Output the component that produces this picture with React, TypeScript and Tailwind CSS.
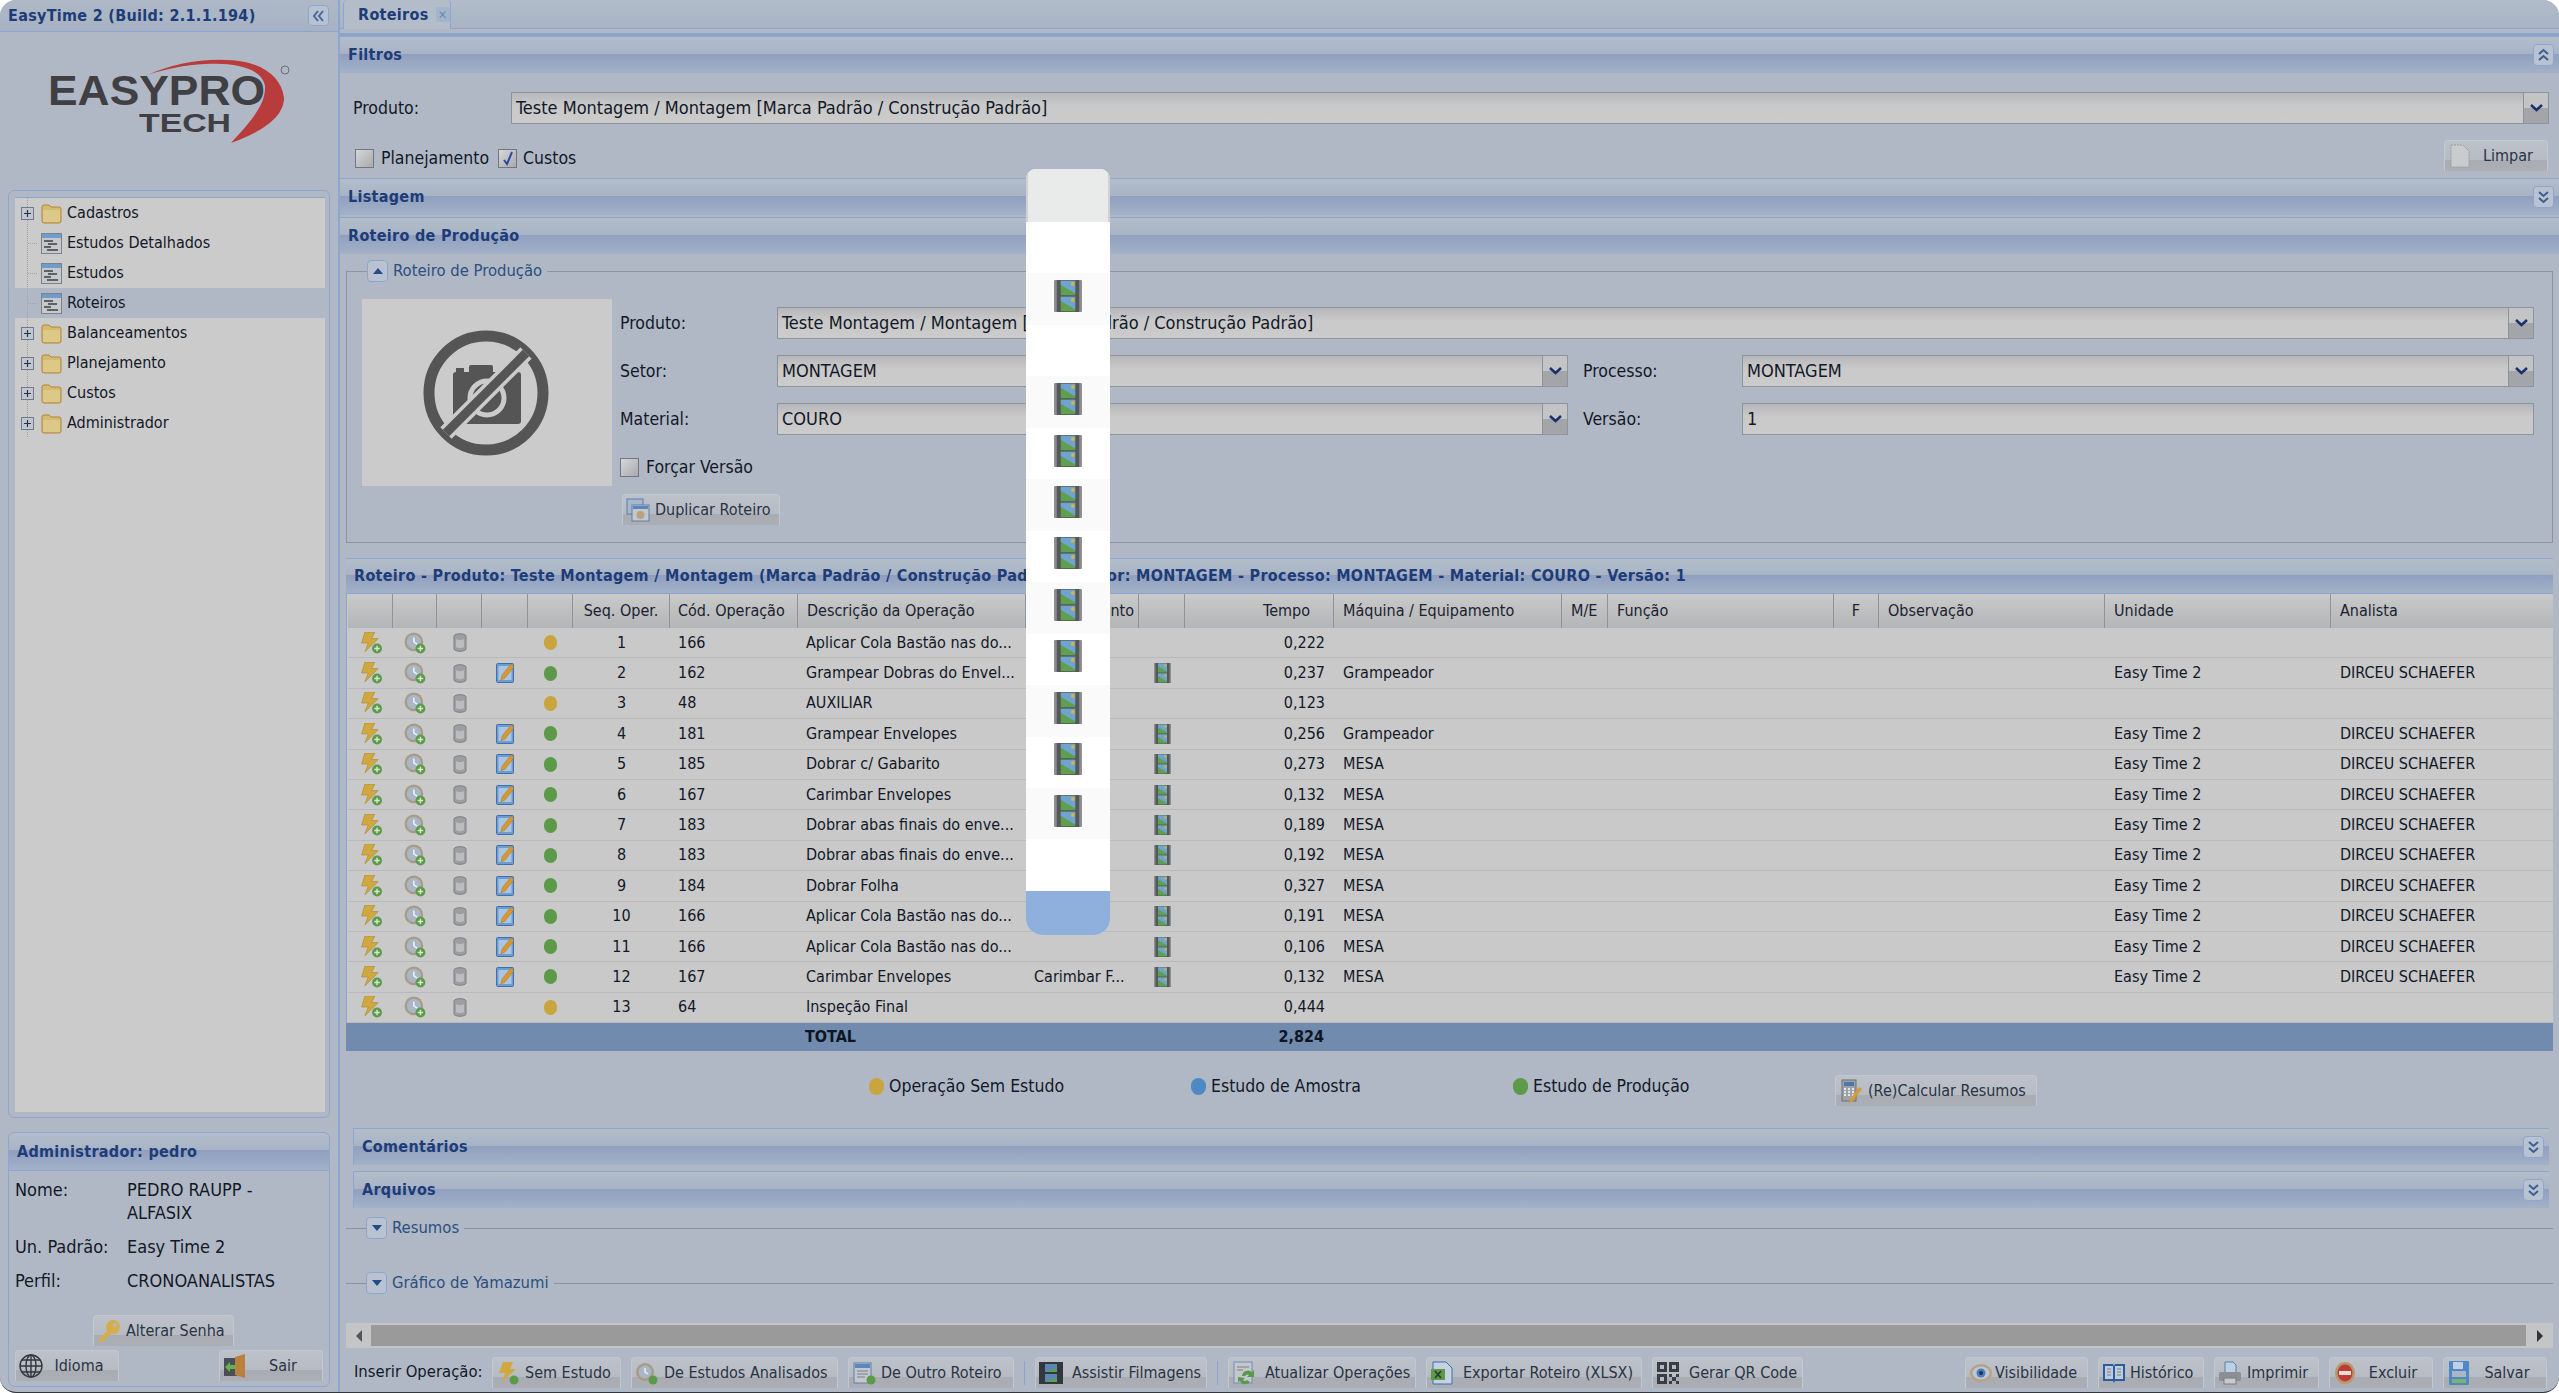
import type { ReactNode } from "react";

const headerBg = "bg-[linear-gradient(#b3bdca,#a8b4c6_46%,#8f9fbe_46%,#a3b1c8)]";
const gridCols = "grid grid-cols-[45px_44px_45px_46px_45px_97px_128px_228px_113px_46px_149px_228px_46px_226px_45px_226px_226px_226px]";

// ---------- icons ----------
function Bolt() {
    return (
        <svg width="24" height="22" viewBox="0 0 21 20">
            <path d="M5 0h9l-3 6h6L5 18l3-8H2z" fill="#cfa93f" stroke="#b08a2c" strokeWidth=".6" />
            <circle cx="16" cy="15" r="4.500" fill="#5c9a4a" />
            <path d="M16 12.500v5M13.500 15h5" stroke="#d9e6d2" strokeWidth="1.300" />
        </svg>
    );
}
function ClockPlus() {
    return (
        <svg width="23" height="22" viewBox="0 0 21 20">
            <circle cx="9" cy="9" r="8.500" fill="#a89b84" />
            <circle cx="9" cy="9" r="6.500" fill="#a9b6c6" />
            <path d="M9 5v4l3 2" stroke="#eef1f4" strokeWidth="1.400" fill="none" />
            <circle cx="15" cy="15" r="4.500" fill="#5c9a4a" />
            <path d="M15 12.500v5M12.500 15h5" stroke="#d9e6d2" strokeWidth="1.300" />
        </svg>
    );
}
function Cyl() {
    return (
        <svg width="14" height="19" viewBox="0 0 14 19">
            <path d="M1 3c0-3 12-3 12 0v13c0 3-12 3-12 0z" fill="#9c9ea1" stroke="#7e8083" />
            <path d="M3 6c2 1.500 6 1.500 8 0v8c-2 1.500-6 1.500-8 0z" fill="#bcbdbf" />
        </svg>
    );
}
function DocPen() {
    return (
        <svg width="19" height="20" viewBox="0 0 19 20">
            <rect x=".5" y=".5" width="17" height="19" rx="1" fill="#6e9bd0" stroke="#3f6fae" />
            <rect x="2.500" y="3" width="13" height="14" fill="#a9c5e2" />
            <path d="M15 1l3 2.500-9 11.500-4 2 1-5z" fill="#d9982f" stroke="#a5772a" strokeWidth=".5" />
        </svg>
    );
}
function Dot({ color, size = 13 }: { color: string; size?: number }) {
    return <span className="inline-block rounded-full" style={{ width: size, height: size + 2, background: color }} />;
}
function Film({ w = 17, h = 20 }: { w?: number; h?: number }) {
    return (
        <svg width={w} height={h} viewBox="0 0 17 20">
            <rect x="0" y="0" width="17" height="20" rx="1" fill="#55585a" />
            <path d="M0 0h1.500v20H0zM15.500 0H17v20h-1.500z" fill="#8a8c8e" />
            <rect x="4" y=".5" width="9" height="9" fill="#5f9f4d" />
            <path d="M4 .5h9v8L4 3z" fill="#6fa4d0" />
            <rect x="4" y="10.500" width="9" height="9" fill="#5f9f4d" />
            <path d="M4 10.500h9v8L4 13z" fill="#6fa4d0" />
            <circle cx="11.500" cy="2.500" r="1.200" fill="#d8b04e" />
            <circle cx="11.500" cy="12.500" r="1.200" fill="#d8b04e" />
        </svg>
    );
}
function Folder() {
    return (
        <svg width="21" height="21" viewBox="0 0 21 21">
            <path d="M1 4q0-2 2-2h5l2 2h8q2 0 2 2v12q0 2-2 2H3q-2 0-2-2z" fill="#d5bb70" stroke="#b3833a" />
            <rect x="2" y="7" width="17" height="12" fill="#dcc987" />
        </svg>
    );
}
function TreeDoc() {
    return (
        <svg width="21" height="21" viewBox="0 0 21 21">
            <rect x=".5" y=".5" width="20" height="20" fill="#c6c9cc" stroke="#7d8287" />
            <rect x="1" y="1" width="19" height="4" fill="#6f9cca" />
            <path d="M3 8h9M7 11h9M3 14h7M6 17h11" stroke="#3c4044" strokeWidth="1.300" />
        </svg>
    );
}
function Chevrons({ up = false }: { up?: boolean }) {
    return (
        <span className="flex h-[22px] w-[21px] items-center justify-center rounded-[4px] border border-[#8ea6cf] bg-[#b8c2d0]">
            <svg width="13" height="14" viewBox="0 0 13 14" fill="none" stroke="#3c5f93" strokeWidth="2">
                {up ? <path d="M2 6l4.500-4 4.500 4M2 12l4.500-4 4.500 4" /> : <path d="M2 2l4.500 4 4.500-4M2 8l4.500 4 4.500-4" />}
            </svg>
        </span>
    );
}
function LegendToggle({ up = false }: { up?: boolean }) {
    return (
        <span className="flex h-[22px] w-[21px] items-center justify-center rounded-[4px] border border-[#8ea6cf] bg-[#b8c2d0]">
            <svg width="10" height="6" viewBox="0 0 10 6" fill="#254c86">
                {up ? <path d="M5 0l5 6H0z" /> : <path d="M0 0h10L5 6z" />}
            </svg>
        </span>
    );
}
function Svg20({ children }: { children: ReactNode }) {
    return <svg width="24" height="24" viewBox="0 0 24 24" className="shrink-0">{children}</svg>;
}
const icons: Record<string, ReactNode> = {
    bolt: <Svg20><path d="M7 1h10l-3 7h6L6 21l3-9H3z" fill="#cfa93f" /><circle cx="18" cy="19" r="4.500" fill="#5c9a4a" /></Svg20>,
    clock: <Svg20><circle cx="10" cy="11" r="9" fill="#a89b84" /><circle cx="10" cy="11" r="6.500" fill="#a9b6c6" /><path d="M10 7v4l3 2" stroke="#eef1f4" strokeWidth="1.500" fill="none" /><circle cx="18" cy="19" r="4.500" fill="#5c9a4a" /></Svg20>,
    win: <Svg20><rect x="2" y="2" width="17" height="20" fill="#c4c8cd" stroke="#5d7eab" /><rect x="3" y="3" width="15" height="4" fill="#5d87bb" /><path d="M5 10h11M5 13h11M5 16h8" stroke="#7a8087" /><circle cx="19" cy="19" r="4.500" fill="#5c9a4a" /></Svg20>,
    film: <Svg20><rect x="0" y="1" width="24" height="22" fill="#33383f" /><rect x="6" y="3" width="12" height="8" fill="#5b86b6" /><rect x="6" y="13" width="12" height="8" fill="#5b86b6" /><path d="M6 11l12-4v4zM6 21l12-4v4z" fill="#5f9f4d" /></Svg20>,
    refresh: <Svg20><rect x="2" y="1" width="18" height="21" fill="#c4c8cd" stroke="#6f8fb5" /><path d="M5 6h12M5 9h6" stroke="#7a8087" /><path d="M10 15a6 6 0 0 1 10-4l2-2v7h-7l2-2a3 3 0 0 0-4 1zM6 16l7 1-2 2a3 3 0 0 0 4 0l3 2a6 6 0 0 1-10-1l-2 1z" fill="#58994a" /></Svg20>,
    excel: <Svg20><path d="M3 1h13l6 6v16H3z" fill="#c5d2e2" stroke="#3f6fae" /><path d="M1 8h14v11H1z" fill="#5c9a4a" /><path d="M5 10l6 7M11 10l-6 7" stroke="#2e3a35" strokeWidth="1.800" /></Svg20>,
    qr: <Svg20><path d="M1 1h10v10H1zM13 1h10v10H13zM1 13h10v10H1z" fill="#3a3d42" /><path d="M4 4h4v4H4zM16 4h4v4h-4zM4 16h4v4H4z" fill="#b5bac3" /><path d="M13 13h3v3h-3zM20 13h3v3h-3zM16 16h4v4h-4zM13 20h3v3h-3zM20 20h3v3h-3z" fill="#3a3d42" /></Svg20>,
    eye: <Svg20><ellipse cx="12" cy="12" rx="11" ry="9" fill="#bba17f" /><ellipse cx="12" cy="12" rx="8.500" ry="6.500" fill="#b9c8dc" /><circle cx="12" cy="12" r="4.500" fill="#4d7db8" /><circle cx="12" cy="12" r="2" fill="#1f3350" /></Svg20>,
    book: <Svg20><path d="M1 3h10l1 2 1-2h10v17H13l-1 2-1-2H1z" fill="#2b5c9e" /><path d="M3 5h8v13H3zM13 5h8v13h-8z" fill="#bfccdb" /><path d="M5 8h4M5 11h4M5 14h4M15 8h4M15 11h4M15 14h4" stroke="#7a8087" /></Svg20>,
    print: <Svg20><path d="M7 1h8l3 3v8H7z" fill="#bdd0e6" stroke="#5d7eab" /><rect x="1" y="11" width="22" height="9" rx="2" fill="#8b8f94" /><rect x="6" y="17" width="12" height="6" fill="#c7cacd" stroke="#7a7d80" /></Svg20>,
    stop: <Svg20><ellipse cx="12" cy="12" rx="10" ry="11" fill="#b9966e" /><ellipse cx="12" cy="12" rx="7.500" ry="8.500" fill="#bb3d35" /><rect x="6" y="10" width="12" height="4" fill="#e5dcd2" /></Svg20>,
    disk: <Svg20><rect x="2" y="0" width="20" height="24" rx="1" fill="#4f88c4" /><rect x="6" y="1" width="10" height="7" fill="#bdd0e6" /><rect x="5" y="10" width="14" height="6" fill="#a9b6c6" /><rect x="5" y="18" width="14" height="4" fill="#7eb26a" /></Svg20>,
    page: <Svg20><path d="M3 1h12l6 6v16H3z" fill="#c9cbcd" stroke="#9a9c9f" strokeDasharray="2 1" /></Svg20>,
    dup: <Svg20><rect x="1" y="1" width="16" height="15" fill="#a9b7cc" stroke="#5d7eab" /><rect x="6" y="7" width="17" height="16" fill="#c4c8cd" stroke="#5d7eab" /><rect x="7" y="8" width="15" height="3" fill="#5d87bb" /><circle cx="14.500" cy="17" r="4" fill="#bba17f" /></Svg20>,
    calc: <Svg20><rect x="3" y="1" width="14" height="21" fill="#9da1a8" stroke="#6c7077" /><rect x="5" y="3" width="10" height="4" fill="#4d77a8" /><path d="M5 10h10M5 13h10M5 16h10" stroke="#e3e5e8" strokeDasharray="2 2" strokeWidth="2" /><path d="M20 8l3 2-10 13-3 1 1-4z" fill="#d79a35" /></Svg20>,
    key: <Svg20><circle cx="16" cy="8" r="7" fill="#d5ad4a" /><circle cx="18" cy="6" r="2" fill="#b1b8c5" /><path d="M11 11L2 20v3h4l2-2 1-3 3-1 2-2z" fill="#d5ad4a" /></Svg20>,
    globe: <Svg20><g fill="none" stroke="#33373c" strokeWidth="1.400"><circle cx="12" cy="12" r="11" /><ellipse cx="12" cy="12" rx="5" ry="11" /><path d="M1 12h22M3 6h18M3 18h18M12 1v22" /></g></Svg20>,
    door: <Svg20><rect x="1" y="4" width="13" height="18" fill="#4a5057" /><path d="M12 3l10-3v24l-10-3z" fill="#b9813d" /><path d="M2 13l5-5v3h6v4H7v3z" fill="#6fae4e" /></Svg20>,
};

// ---------- small parts ----------
function Btn({ w, icon, label, center = false, gap = "gap-[5px]" }: { w: string; icon: string; label: string; center?: boolean; gap?: string }) {
    return (
        <div className={`${w} ${gap} flex h-[31px] shrink-0 items-center overflow-hidden rounded-t-[4px] border border-b-0 border-[#c3c7ce] bg-[linear-gradient(#bcc1ca,#b6bbc4_62%,#a9adb3_62%,#abafb5)] pl-[3px] whitespace-nowrap text-[#2a3342]`}>
            {icons[icon]}
            <span className={center ? "flex-1 pr-[8px] text-center" : ""}>{label}</span>
        </div>
    );
}
function PanelHeader({ title, chevron, className = "" }: { title: string; chevron?: "up" | "down"; className?: string }) {
    return (
        <div className={`${headerBg} flex h-[37px] shrink-0 items-center justify-between border-t border-[#8ea6cf] pr-[5px] pl-[8px] font-bold tracking-[0.3px] text-[#1d3c78] ${className}`}>
            <span>{title}</span>
            {chevron && <Chevrons up={chevron === "up"} />}
        </div>
    );
}
function Select({ value, className = "" }: { value: string; className?: string }) {
    return (
        <div className={`flex h-[32px] items-stretch border border-[#8f949b] bg-[linear-gradient(#b6b7ba,#c9c9c9_40%,#cbcbcb)] ${className}`}>
            <span className="flex-1 overflow-hidden pl-[4px] text-[18px] leading-[30px] whitespace-nowrap text-[#111827]">{value}</span>
            <span className="flex w-[25px] items-center justify-center border-l border-[#8f949b] bg-[linear-gradient(#c3c4c6,#c3c4c6_50%,#a3a5a8_50%)]">
                <svg width="13" height="8" viewBox="0 0 13 8" fill="none" stroke="#1c2f6e" strokeWidth="2.500"><path d="M1 1l5.500 5L12 1" /></svg>
            </span>
        </div>
    );
}
function Check({ checked = false }: { checked?: boolean }) {
    return (
        <span className="flex h-[19px] w-[19px] shrink-0 items-center justify-center border border-[#73777d] bg-[linear-gradient(135deg,#d6d7d9,#a8aaad)]">
            {checked && <svg width="12" height="15" viewBox="0 0 12 15" fill="none" stroke="#2e4a9a" strokeWidth="2"><path d="M2 9l3 4 5-12" /></svg>}
        </span>
    );
}
function Legend({ color, label, className }: { color: string; label: string; className: string }) {
    return (
        <div className={`flex items-center gap-[5px] text-[17.5px] ${className}`}>
            <Dot color={color} size={15} />
            <span className="text-[#111827]">{label}</span>
        </div>
    );
}
function CollapsedSet({ label, className = "" }: { label: string; className?: string }) {
    return (
        <div className={`mx-[6px] flex h-[22px] items-center ${className}`}>
            <div className="h-px w-[20px] bg-[#8f949b]" />
            <LegendToggle />
            <span className="px-[5px] text-[16.5px] text-[#2a4f80]">{label}</span>
            <div className="h-px flex-1 bg-[#8f949b]" />
        </div>
    );
}

// ---------- data ----------
const ops = [
    { s: 1, c: 166, d: "Aplicar Cola Bastão nas do...", t: "0,222", m: "", st: "y" },
    { s: 2, c: 162, d: "Grampear Dobras do Envel...", t: "0,237", m: "Grampeador", st: "g" },
    { s: 3, c: 48, d: "AUXILIAR", t: "0,123", m: "", st: "y" },
    { s: 4, c: 181, d: "Grampear Envelopes", t: "0,256", m: "Grampeador", st: "g" },
    { s: 5, c: 185, d: "Dobrar c/ Gabarito", t: "0,273", m: "MESA", st: "g" },
    { s: 6, c: 167, d: "Carimbar Envelopes", t: "0,132", m: "MESA", st: "g" },
    { s: 7, c: 183, d: "Dobrar abas finais do enve...", t: "0,189", m: "MESA", st: "g" },
    { s: 8, c: 183, d: "Dobrar abas finais do enve...", t: "0,192", m: "MESA", st: "g" },
    { s: 9, c: 184, d: "Dobrar Folha", t: "0,327", m: "MESA", st: "g" },
    { s: 10, c: 166, d: "Aplicar Cola Bastão nas do...", t: "0,191", m: "MESA", st: "g" },
    { s: 11, c: 166, d: "Aplicar Cola Bastão nas do...", t: "0,106", m: "MESA", st: "g" },
    { s: 12, c: 167, d: "Carimbar Envelopes", x: "Carimbar F...", t: "0,132", m: "MESA", st: "g" },
    { s: 13, c: 64, d: "Inspeção Final", t: "0,444", m: "", st: "y" },
];
const tree = [
    { label: "Cadastros", folder: true },
    { label: "Estudos Detalhados" },
    { label: "Estudos" },
    { label: "Roteiros", active: true },
    { label: "Balanceamentos", folder: true },
    { label: "Planejamento", folder: true },
    { label: "Custos", folder: true },
    { label: "Administrador", folder: true },
];
const heads = ["", "", "", "", "", "Seq. Oper.", "Cód. Operação", "Descrição da Operação", "Procedimento", "", "Tempo", "Máquina / Equipamento", "M/E", "Função", "F", "Observação", "Unidade", "Analista"];
const headClass = ["", "", "", "", "", "text-center", "pl-[8px]", "pl-[9px]", "pr-[4px] text-right", "", "pr-[23px] text-right", "pl-[9px]", "pl-[9px]", "pl-[9px]", "text-center", "pl-[9px]", "pl-[9px]", "pl-[9px]"];
const ghostIcons = [1, 3, 4, 5, 6, 7, 8, 9, 10, 11];

function Logo() {
    return (
        <svg width="339" height="158" viewBox="0 0 339 158">
            <text x="48" y="73" textLength="217" lengthAdjust="spacingAndGlyphs" fontSize="42" fontWeight="700" fontFamily="Liberation Sans" fill="#3f3f44">EASYPRO</text>
            <text x="139" y="100" textLength="92" lengthAdjust="spacingAndGlyphs" fontSize="26" fontWeight="700" fontFamily="Liberation Sans" fill="#3f3f44">TECH</text>
            <path d="M147 43C175 30 215 24 245 30C268 35 282 48 284 66C284 85 262 100 231 111C252 88 266 72 265 54C262 36 235 30 205 32C185 33 165 37 147 43Z" fill="#b93c3c" />
            <circle cx="285" cy="38" r="4" fill="none" stroke="#6b6f75" strokeWidth="1" />
        </svg>
    );
}

function Sidebar() {
    return (
        <aside className="flex h-full w-[340px] shrink-0 flex-col border-r-2 border-[#8ea6cf]">
            <div className="flex h-[32px] items-center justify-between border-b border-[#8ea6cf] bg-[linear-gradient(#aeb8c6,#a6b2c4)] pr-[9px] pl-[8px] font-bold tracking-[0.3px] text-[#1d3c78]">
                <span>EasyTime 2 (Build: 2.1.1.194)</span>
                <span className="flex h-[21px] w-[21px] items-center justify-center rounded-[4px] border border-[#8ea6cf] bg-[#b8c2d0]">
                    <svg width="13" height="12" viewBox="0 0 13 12" fill="none" stroke="#466a9c" strokeWidth="2"><path d="M6 1L2 6l4 5M11 1L7 6l4 5" /></svg>
                </span>
            </div>
            <div className="h-[158px] shrink-0"><Logo /></div>
            <div className="mx-[8px] flex h-[928px] shrink-0 flex-col rounded-[6px] border border-[#8ea6cf] pt-[6px] pr-[4px] pb-[5px] pl-[6px]">
                <div className="flex-1 border-t border-[#8ea6cf] bg-[#cbcbcb]">
                    {tree.map((n) => (
                        <div key={n.label} className={`flex h-[30px] items-center ${n.active ? "bg-[#b1b8c5]" : ""}`}>
                            <svg width="26" height="30" viewBox="0 0 26 30" className="shrink-0">
                                <path d="M12.500 0v30" stroke="#a0a3a6" strokeDasharray="1 1" />
                                {n.folder ? (
                                    <g><rect x="6.500" y="9.500" width="12" height="12" fill="#c2c6cd" stroke="#6d7a8f" /><path d="M9 15.500h7M12.500 12v7" stroke="#26324d" strokeWidth="1.200" /></g>
                                ) : (
                                    <path d="M13 15.500h9" stroke="#a0a3a6" strokeDasharray="1 1" />
                                )}
                            </svg>
                            {n.folder ? <Folder /> : <TreeDoc />}
                            <span className="ml-[5px] text-[#111827]">{n.label}</span>
                        </div>
                    ))}
                </div>
            </div>
            <div className="mx-[8px] mt-[14px] flex h-[255px] shrink-0 flex-col rounded-[6px] border border-[#8ea6cf]">
                <div className={`${headerBg} flex h-[38px] shrink-0 items-center rounded-t-[6px] border-b border-[#8ea6cf] pl-[8px] font-bold tracking-[0.3px] text-[#1d3c78]`}>Administrador: pedro</div>
                <div className="grid grid-cols-[112px_1fr] pt-[7px] pr-[10px] pl-[6px] text-[18px] text-[#111827]">
                    <span className="leading-[23px]">Nome:</span>
                    <span className="leading-[23px]">PEDRO RAUPP - ALFASIX</span>
                    <span className="mt-[11px] leading-[23px]">Un. Padrão:</span>
                    <span className="mt-[11px] leading-[23px]">Easy Time 2</span>
                    <span className="mt-[11px] leading-[23px]">Perfil:</span>
                    <span className="mt-[11px] leading-[23px]">CRONOANALISTAS</span>
                </div>
                <div className="mt-[23px] flex justify-center pr-[11px]"><Btn w="w-[141px]" icon="key" label="Alterar Senha" /></div>
                <div className="mt-[4px] flex justify-between px-[6px]">
                    <Btn w="w-[104px]" icon="globe" label="Idioma" center />
                    <Btn w="w-[104px]" icon="door" label="Sair" center />
                </div>
            </div>
        </aside>
    );
}

function OperacoesTable() {
    return (
        <div className="mx-[6px]">
            <div className={`${headerBg} flex h-[36px] items-center border-t border-b border-[#8ea6cf] pl-[8px] font-bold tracking-[0.3px] whitespace-nowrap text-[#1d3c78]`}>
                Roteiro - Produto: Teste Montagem / Montagem (Marca Padrão / Construção Padrão) - Setor: MONTAGEM - Processo: MONTAGEM - Material: COURO - Versão: 1
            </div>
            <div className="border-l border-[#8ea6cf] bg-[#c9c9c9] pl-px">
                <div className={`${gridCols} h-[34px] items-stretch bg-[linear-gradient(#c9cac9,#b3b5b7)] text-[#1a2230]`}>
                    {heads.map((h, i) => (
                        <div key={i} className={`overflow-hidden border-r border-[#8f949b] leading-[34px] whitespace-nowrap last:border-r-0 ${headClass[i]}`}>{h}</div>
                    ))}
                </div>
                {ops.map((o) => (
                    <div key={o.s} className={`${gridCols} h-[30.4px] items-center border-b border-[#b7b9bc] bg-[#c9c9c9] whitespace-nowrap text-[#111827]`}>
                        <div className="flex justify-center"><Bolt /></div>
                        <div className="flex justify-center"><ClockPlus /></div>
                        <div className="flex justify-center"><Cyl /></div>
                        <div className="flex justify-center">{o.st === "g" && <DocPen />}</div>
                        <div className="flex justify-center"><Dot color={o.st === "g" ? "#5c9a4a" : "#c9a53f"} /></div>
                        <div className="text-center">{o.s}</div>
                        <div className="pl-[8px]">{o.c}</div>
                        <div className="pl-[8px]">{o.d}</div>
                        <div className="pl-[8px]">{o.x ?? ""}</div>
                        <div className="flex justify-center">{o.m && <Film />}</div>
                        <div className="pr-[9px] text-right">{o.t}</div>
                        <div className="pl-[9px]">{o.m}</div>
                        <div /><div /><div /><div />
                        <div className="pl-[9px]">{o.m && "Easy Time 2"}</div>
                        <div className="pl-[9px]">{o.m && "DIRCEU SCHAEFER"}</div>
                    </div>
                ))}
            </div>
            <div className={`${gridCols} h-[28px] items-center bg-[#708bae] pl-px font-bold text-[#0f1520]`}>
                <div className="col-span-7" />
                <div className="pl-[8px]">TOTAL</div>
                <div /><div />
                <div className="pr-[9px] text-right">2,824</div>
            </div>
        </div>
    );
}

// bright column floating over the page
function GhostColumn() {
    return (
        <div className="absolute top-[169px] left-[1026px] flex w-[84px] flex-col overflow-hidden rounded-t-[10px] rounded-b-[16px] bg-white">
            <div className="h-[53px] border-x-[2px] border-[#d0d2d2] bg-[#e9eaea]" />
            {ops.map((_, i) => (
                <div key={i} className={`flex h-[51.46px] items-center justify-center pb-[6px] ${i % 2 === 1 ? "bg-[#fafafa]" : "bg-white"}`}>
                    {ghostIcons.includes(i) && <Film w={28} h={32} />}
                </div>
            ))}
            <div className="h-[44px] bg-[#8fb0dc]" />
        </div>
    );
}

function Main() {
    return (
        <main className="flex h-full w-[2219px] flex-col">
            <div className="flex h-[36px] shrink-0 flex-col">
                <div className="flex h-[29px] items-start border-b border-[#8ea6cf] bg-[linear-gradient(#b2bcc9,#a8b4c5)] pl-[3px]">
                    <div className="flex h-[29px] w-[108px] items-center gap-[7px] rounded-t-[4px] border-x border-[#8ea6cf] bg-[#b3bcc9] pl-[14px] font-bold tracking-[0.3px] text-[#1d3c78]">
                        <span>Roteiros</span>
                        <span className="flex h-[15px] w-[15px] items-center justify-center rounded-[2px] bg-[#a3b4cd] text-[12px] leading-none font-bold text-[#6f88ae]">✕</span>
                    </div>
                </div>
                <div className="mt-[4px] h-[3px] bg-[#8ea3c8]" />
            </div>
            <PanelHeader title="Filtros" chevron="up" />
            <div className="flex h-[105px] shrink-0 flex-col text-[17.5px]">
                <div className="mt-[19px] flex items-center">
                    <span className="w-[171px] pl-[13px] text-[#111827]">Produto:</span>
                    <Select className="w-[2038px]" value="Teste Montagem / Montagem [Marca Padrão / Construção Padrão]" />
                </div>
                <div className="mt-[19px] flex h-[31px] items-center pr-[11px] pl-[15px] text-[#111827]">
                    <Check /><span className="mr-[9px] ml-[7px]">Planejamento</span>
                    <Check checked /><span className="ml-[6px]">Custos</span>
                    <div className="ml-auto -mt-[6px] text-[16px]"><Btn w="w-[104px]" icon="page" label="Limpar" center /></div>
                </div>
            </div>
            <PanelHeader title="Listagem" chevron="down" />
            <PanelHeader title="Roteiro de Produção" className="mt-[2px]" />

            <fieldset className="mx-[6px] mt-[6px] h-[283px] shrink-0 border border-[#8f949b]">
                <legend className="ml-[20px] flex h-[22px] items-center gap-[5px] px-0 pr-[5px] text-[16.5px] text-[#2a4f80]">
                    <LegendToggle up />Roteiro de Produção
                </legend>
                <div className="flex pt-[17px] pl-[15px]">
                    <div className="flex h-[187px] w-[250px] shrink-0 items-center justify-center bg-[#cbcbcb]">
                        <svg width="126" height="126" viewBox="0 0 126 126" className="mr-[3px]">
                            <rect x="30" y="42" width="68" height="52" rx="3" fill="#555" />
                            <rect x="46" y="35" width="24" height="10" rx="2" fill="#555" />
                            <rect x="33" y="38" width="8" height="4" fill="#555" />
                            <circle cx="64" cy="68" r="17" fill="none" stroke="#cbcbcb" strokeWidth="5" />
                            <circle cx="63" cy="63" r="57" fill="none" stroke="#555" strokeWidth="11" />
                            <path d="M103 23L23 103" stroke="#cbcbcb" strokeWidth="16" />
                            <path d="M103 23L23 103" stroke="#555" strokeWidth="9" />
                        </svg>
                    </div>
                    <div className="flex-1 pl-[8px] text-[17.5px] text-[#111827]">
                        <div className="mt-[8px] flex items-center">
                            <span className="w-[157px]">Produto:</span>
                            <Select className="w-[1757px]" value="Teste Montagem / Montagem [Marca Padrão / Construção Padrão]" />
                        </div>
                        <div className="mt-[16px] flex items-center">
                            <span className="w-[157px]">Setor:</span>
                            <Select className="w-[791px]" value="MONTAGEM" />
                            <span className="w-[174px] pl-[15px]">Processo:</span>
                            <Select className="w-[792px]" value="MONTAGEM" />
                        </div>
                        <div className="mt-[16px] flex items-center">
                            <span className="w-[157px]">Material:</span>
                            <Select className="w-[791px]" value="COURO" />
                            <span className="w-[174px] pl-[15px]">Versão:</span>
                            <div className="h-[32px] w-[792px] border border-[#8f949b] bg-[linear-gradient(#b6b7ba,#c9c9c9_40%,#cbcbcb)] pl-[4px] text-[18px] leading-[30px]">1</div>
                        </div>
                        <div className="mt-[19px] flex items-center gap-[7px]"><Check /><span>Forçar Versão</span></div>
                        <div className="mt-[14px] ml-[2px] text-[16px]"><Btn w="w-[158px]" icon="dup" label="Duplicar Roteiro" /></div>
                    </div>
                </div>
            </fieldset>

            <div className="mt-[15px]"><OperacoesTable /></div>

            <div className="relative flex h-[77px] shrink-0 items-start pt-[22px]">
                <Legend color="#c9a53f" label="Operação Sem Estudo" className="ml-[529px] w-[322px]" />
                <Legend color="#4d8ac4" label="Estudo de Amostra" className="w-[322px]" />
                <Legend color="#5c9a4a" label="Estudo de Produção" className="w-[322px]" />
                <div className="mt-[2px]"><Btn w="w-[202px]" icon="calc" label="(Re)Calcular Resumos" /></div>
            </div>

            <div className="mx-[13px] mr-[10px] flex flex-col gap-[6px]">
                <PanelHeader title="Comentários" chevron="down" className="border-l pl-[8px]" />
                <PanelHeader title="Arquivos" chevron="down" className="border-l pl-[8px]" />
            </div>
            <CollapsedSet label="Resumos" className="mt-[9px]" />
            <CollapsedSet label="Gráfico de Yamazumi" className="mt-[33px]" />

            <div className="mx-[6px] mt-[29px] flex h-[25px] shrink-0 items-stretch bg-[#c3c5c7] py-[2px]">
                <div className="flex w-[25px] items-center justify-center"><svg width="6" height="12" viewBox="0 0 6 12" fill="#555"><path d="M6 0v12L0 6z" /></svg></div>
                <div className="flex-1 bg-[#9a9a9a]" />
                <div className="flex w-[27px] items-center justify-center"><svg width="6" height="12" viewBox="0 0 6 12" fill="#333"><path d="M0 0v12l6-6z" /></svg></div>
            </div>

            <div className="mt-[9px] flex items-center gap-[10px] pl-[14px] whitespace-nowrap text-[#111827]">
                <span className="mr-[1px] w-[127px] text-[16.5px]">Inserir Operação:</span>
                <Btn w="w-[129px]" icon="bolt" label="Sem Estudo" />
                <Btn w="w-[207px]" icon="clock" label="De Estudos Analisados" />
                <Btn w="w-[166px]" icon="win" label="De Outro Roteiro" />
                <div className="h-[24px] w-px bg-[#8ea6cf]" />
                <Btn w="w-[172px]" icon="film" label="Assistir Filmagens" gap="gap-[9px]" />
                <div className="h-[24px] w-px bg-[#8ea6cf]" />
                <Btn w="w-[188px]" icon="refresh" label="Atualizar Operações" gap="gap-[9px]" />
                <Btn w="w-[216px]" icon="excel" label="Exportar Roteiro (XLSX)" gap="gap-[9px]" />
                <Btn w="w-[151px]" icon="qr" label="Gerar QR Code" gap="gap-[9px]" />
                <div className="ml-auto flex gap-[10px] pr-[12px]">
                    <Btn w="w-[123px]" icon="eye" label="Visibilidade" gap="gap-[2px]" />
                    <Btn w="w-[106px]" icon="book" label="Histórico" gap="gap-[4px]" />
                    <Btn w="w-[105px]" icon="print" label="Imprimir" />
                    <Btn w="w-[104px]" icon="stop" label="Excluir" center />
                    <Btn w="w-[104px]" icon="disk" label="Salvar" center />
                </div>
            </div>
        </main>
    );
}

export default function App() {
    return (
        <div className="h-[1393px] w-[2559px] overflow-hidden bg-white text-[16px] [font-family:'DejaVu_Sans_Condensed','DejaVu_Sans',sans-serif]">
            <div className="relative flex h-[1393px] overflow-hidden rounded-[16px] border-b border-[#33363b] bg-[#b1b8c5]">
                <Sidebar />
                <Main />
                <GhostColumn />
            </div>
        </div>
    );
}
